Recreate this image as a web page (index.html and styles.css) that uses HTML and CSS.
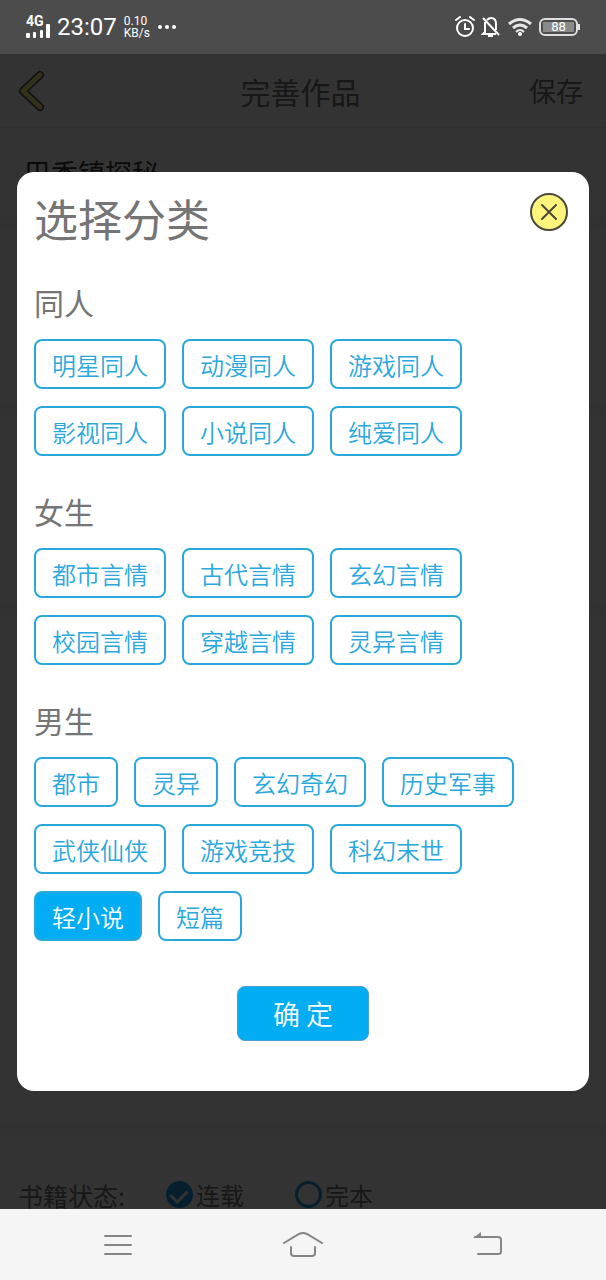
FILE: index.html
```html
<!DOCTYPE html>
<html lang="zh-CN">

<head>
  <meta charset="UTF-8">
  <meta name="viewport" content="width=device-width, initial-scale=1.0">
  <title>完善作品</title>
  <link rel="stylesheet" href="styles.css">
</head>

<body>
  <div class="status-bar">
    <div class="status-left">
      <div class="signal">
        <span class="signal-type">4G</span>
        <svg width="24" height="14" viewBox="0 0 24 14" fill="#fff">
          <rect x="0" y="9" width="4" height="5" rx="1" />
          <rect x="7" y="8" width="3" height="6" rx="1" />
          <rect x="14" y="6" width="3" height="8" rx="1" />
          <rect x="20" y="0" width="4" height="14" rx="1" />
        </svg>
      </div>
      <span class="time">23:07</span>
      <span class="speed">0.10<br>KB/s</span>
      <svg width="20" height="6" viewBox="0 0 20 6" fill="#fff">
        <circle cx="3" cy="3" r="2" />
        <circle cx="10" cy="3" r="2" />
        <circle cx="17" cy="3" r="2" />
      </svg>
    </div>
    <div class="status-right">
      <svg width="20" height="22" viewBox="0 0 20 22" fill="none" stroke="#fff" stroke-width="2" stroke-linecap="round">
        <circle cx="10" cy="12" r="8" />
        <path d="M10 8v5h4M1 4l4-3M19 4l-4-3" />
      </svg>
      <svg width="20" height="22" viewBox="0 0 20 22" fill="none" stroke="#fff" stroke-width="2">
        <path d="M4 6v10l-2 2h13M6 4q2-2 4-2 5 0 5 6v6M2 2l16 17" />
        <path d="M7 20h5" />
      </svg>
      <svg width="26" height="20" viewBox="0 0 26 20" fill="none" stroke="#e6e6e6" stroke-width="3">
        <path d="M2 7q11-9 22 0" />
        <path d="M6 11q7-6 14 0" />
        <path d="M9 15q4-4 8 0" stroke-width="2" />
        <circle cx="13" cy="17" r="2" fill="#fff" stroke="none" />
      </svg>
      <div class="battery"><span class="battery-level">88</span></div>
    </div>
  </div>

  <main class="screen">
    <div class="page">
      <header>
        <a class="back" href="#" aria-label="返回">
          <svg width="28" height="42" viewBox="0 0 28 42" fill="none" stroke-linecap="round" stroke-linejoin="round">
            <path d="M22 5L5 21L22 37" stroke="#555" stroke-width="8" />
            <path d="M22 5L5 21L22 37" stroke="#fff57c" stroke-width="5" />
          </svg>
        </a>
        <h1>完善作品</h1>
        <button class="save" type="button">保存</button>
      </header>
      <div class="row">
        <input class="book-name" type="text" value="巴香镇探秘" aria-label="作品名称">
      </div>
      <div class="row cover"></div>
      <div class="row tags"></div>
      <div class="row intro"></div>
      <div class="row state">
        <span class="state-title">书籍状态:</span>
        <label><input type="radio" name="state" checked>连载</label>
        <label><input type="radio" name="state">完本</label>
      </div>
    </div>

    <div class="mask">
      <div class="modal" role="dialog" aria-labelledby="modal-title">
        <div class="modal-head">
          <h2 id="modal-title">选择分类</h2>
          <button class="close" type="button" aria-label="关闭">
            <svg width="38" height="38" viewBox="0 0 38 38" fill="none" stroke="#4a483c" stroke-width="2" stroke-linecap="round">
              <circle cx="19" cy="19" r="18" fill="#fff57c" />
              <path d="M12 12L26 26M26 12L12 26" />
            </svg>
          </button>
        </div>

        <section>
          <h3>同人</h3>
          <div class="options">
            <button type="button">明星同人</button>
            <button type="button">动漫同人</button>
            <button type="button">游戏同人</button>
            <button type="button">影视同人</button>
            <button type="button">小说同人</button>
            <button type="button">纯爱同人</button>
          </div>
        </section>

        <section>
          <h3>女生</h3>
          <div class="options">
            <button type="button">都市言情</button>
            <button type="button">古代言情</button>
            <button type="button">玄幻言情</button>
            <button type="button">校园言情</button>
            <button type="button">穿越言情</button>
            <button type="button">灵异言情</button>
          </div>
        </section>

        <section>
          <h3>男生</h3>
          <div class="options">
            <button type="button">都市</button>
            <button type="button">灵异</button>
            <button type="button">玄幻奇幻</button>
            <button type="button">历史军事</button>
            <button type="button">武侠仙侠</button>
            <button type="button">游戏竞技</button>
            <button type="button">科幻末世</button>
            <button type="button" class="active">轻小说</button>
            <button type="button">短篇</button>
          </div>
        </section>

        <button class="confirm" type="button">确 定</button>
      </div>
    </div>
  </main>

  <nav class="nav-bar">
    <button type="button" aria-label="菜单">
      <svg width="40" height="30" viewBox="0 0 40 30" fill="none" stroke="#858585" stroke-width="2" stroke-linecap="round">
        <path d="M7 6h26M7 15h26M7 24h26" />
      </svg>
    </button>
    <button type="button" aria-label="主页">
      <svg width="40" height="30" viewBox="0 0 40 30" fill="none" stroke="#858585" stroke-width="2" stroke-linecap="round">
        <path d="M1 13L16 4q4-2 8 0L39 13" />
        <path d="M8 17v6q0 3 3 3h18q3 0 3-3v-6" />
      </svg>
    </button>
    <button type="button" aria-label="返回">
      <svg width="40" height="30" viewBox="0 0 40 30" fill="none" stroke="#858585" stroke-width="2" stroke-linecap="round">
        <path d="M7 7h23q3 0 3 3v12q0 2-3 2H10" />
        <path d="M5 8l8-6v6z" fill="#858585" stroke="none" />
      </svg>
    </button>
  </nav>
</body>

</html>
```
FILE: styles.css
```css
* {
  box-sizing: border-box;
}

body {
  display: flex;
  flex-direction: column;
  min-height: 100vh;
  margin: 0;
  background: #f5f5f5;
  font-family: "Noto Sans CJK SC", sans-serif;
}

h1,
h2,
h3 {
  margin: 0;
  font-weight: normal;
}

button,
input {
  margin: 0;
  padding: 0;
  border: none;
  background: none;
  font-family: inherit;
}

svg {
  display: block;
}

/* 系统状态栏 */
.status-bar {
  display: flex;
  align-items: center;
  justify-content: space-between;
  height: 54px;
  padding: 0 28px 0 26px;
  background: #4c4c4c;
  color: #fff;
  font-family: Roboto, sans-serif;
}

.status-left,
.status-right {
  display: flex;
  align-items: center;
  gap: 7px;
}

.status-right {
  gap: 6px;
}

.signal {
  display: grid;
}

.signal > * {
  grid-area: 1 / 1;
}

.signal svg {
  align-self: end;
}

.signal-type {
  height: 22px;
  font-size: 14px;
  line-height: 11px;
  font-weight: bold;
}

.time {
  font-size: 24px;
}

.speed {
  font-size: 12px;
  line-height: 12px;
}

.battery {
  display: flex;
  position: relative;
  width: 39px;
  height: 18px;
  padding: 2px;
  border: 2px solid #ddd;
  border-radius: 6px;
}

.battery::after {
  content: "";
  position: absolute;
  top: 4px;
  right: -4px;
  width: 2px;
  height: 6px;
  background: #ddd;
}

.battery-level {
  flex: 1;
  background: #8a8a8a;
  font-size: 13px;
  line-height: 10px;
  text-align: center;
}

/* 页面与遮罩叠在同一格 */
.screen {
  display: grid;
  flex: 1;
  overflow: hidden;
}

.page,
.mask {
  grid-area: 1 / 1;
}

.page {
  background: #fff;
  color: #757575;
}

header {
  display: grid;
  grid-template-columns: 1fr auto 1fr;
  align-items: center;
  height: 74px;
  padding: 0 23px 0 18px;
  border-bottom: 1px solid #eee;
}

h1 {
  font-size: 30px;
}

.back {
  justify-self: start;
}

.save {
  justify-self: end;
  color: #757575;
  font-size: 27px;
}

.row {
  border-bottom: 12px solid #f4f4f4;
}

.book-name {
  display: block;
  width: 100%;
  height: 89px;
  padding: 0 24px;
  color: #333;
  font-size: 27px;
}

.cover {
  height: 187px;
}

.tags {
  height: 201px;
}

.intro {
  height: 520px;
}

.state {
  display: flex;
  align-items: center;
  gap: 51px;
  padding: 44px 18px 0;
  border: none;
  font-size: 24px;
  line-height: 28px;
}

.state-title {
  margin-right: -10px;
  font-size: 25px;
}

.state label {
  display: flex;
  gap: 3px;
}

.state input {
  display: flex;
  justify-content: center;
  appearance: none;
  width: 27px;
  height: 27px;
  border: 3px solid #1e9be6;
  border-radius: 50%;
}

.state input:checked {
  background: #1e9be6;
}

.state input:checked::before {
  content: "";
  width: 13px;
  height: 8px;
  margin-top: 5px;
  border: solid #fff;
  border-width: 0 0 3px 3px;
  transform: rotate(-45deg);
}

.mask {
  z-index: 1;
  padding: 118px 17px;
  background: rgba(0, 0, 0, 0.8);
}

/* 分类弹窗 */
.modal {
  padding: 14px 17px 50px;
  border-radius: 17px;
  background: #fff;
  color: #757575;
}

.modal-head {
  display: flex;
  justify-content: space-between;
  align-items: flex-start;
  margin-bottom: 34px;
}

h2 {
  font-size: 44px;
  line-height: 64px;
}

.close {
  margin: 7px 4px 0 0;
}

section + section {
  margin-top: 37px;
}

h3 {
  margin-bottom: 19px;
  font-size: 30px;
  line-height: 36px;
}

.options {
  display: flex;
  flex-wrap: wrap;
  gap: 17px 16px;
}

.options button {
  height: 50px;
  padding: 0 16px;
  border: 2px solid #2aa8dc;
  border-radius: 8px;
  color: #2aa8dc;
  font-size: 24px;
  font-weight: 350;
}

.options .active {
  background: #03adf4;
  color: #fff;
}

.confirm {
  display: block;
  width: 132px;
  height: 55px;
  margin: 45px auto 0;
  border: 1px solid #4f9fd0;
  border-radius: 8px;
  background: #03adf4;
  color: #fff;
  font-size: 27px;
  font-weight: 350;
}

/* 系统导航栏 */
.nav-bar {
  display: flex;
  justify-content: space-between;
  align-items: center;
  height: 71px;
  padding: 0 98px;
  background: #f5f5f5;
}
```
